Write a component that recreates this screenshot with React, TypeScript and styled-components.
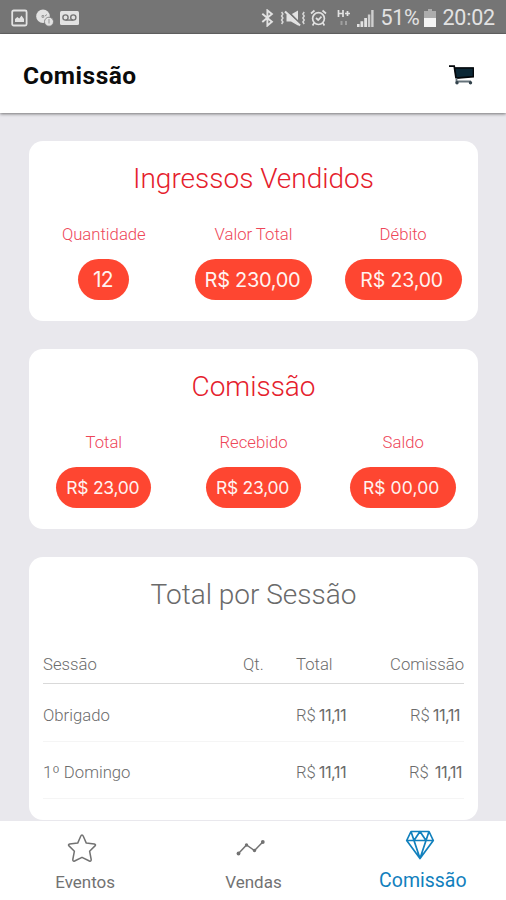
import React from "react";
import styled, { createGlobalStyle } from "styled-components";

const GlobalStyle = createGlobalStyle`
  * { box-sizing: border-box; }
  body { margin: 0; font-family: Roboto, "Liberation Sans", sans-serif; background: #e9e8ed; }
`;

const Screen = styled.div`
  width: 506px;
  height: 900px;
  display: flex;
  flex-direction: column;
  overflow: hidden;
  background: #e9e8ed;
`;

const StatusBar = styled.div`
  height: 34px;
  flex: none;
  display: flex;
  align-items: center;
  justify-content: space-between;
  padding: 3px 11px 0 11px;
  background: #757575;
  border-bottom: 1px solid #676767;
  color: #e2e2e2;
`;

const StatusGroup = styled.div`
  display: flex;
  align-items: center;
  svg { display: block; flex: none; }
`;

const StatusText = styled.span<{ $track: number }>`
  font-size: 21.5px;
  line-height: 30px;
  white-space: nowrap;
  letter-spacing: ${(p) => p.$track}px;
`;

const Gap = styled.span<{ $w: number }>`
  width: ${(p) => p.$w}px;
  flex: none;
`;

const Header = styled.header`
  height: 79px;
  flex: none;
  display: flex;
  align-items: center;
  justify-content: space-between;
  padding: 3px 32px 0 23px;
  background: #fff;
  box-shadow: 0 1px 3px rgba(0, 0, 0, 0.5);
  z-index: 1;
`;

const PageTitle = styled.h1`
  margin: 0;
  padding-top: 1px;
  font-size: 24.5px;
  line-height: 30px;
  font-weight: 700;
  letter-spacing: 0.5px;
  color: #0b0b0b;
`;

const Content = styled.main`
  flex: 1;
  min-height: 0;
  display: flex;
  flex-direction: column;
  gap: 28px;
  padding: 28px 28px 1px 29px;
`;

const Card = styled.section<{ $height: number }>`
  height: ${(p) => p.$height}px;
  flex: none;
  border-radius: 14px;
  background: #fff;
`;

const CardTitle = styled.h2<{ $muted?: boolean }>`
  margin: 0;
  padding-top: 20px;
  text-align: center;
  font-size: 28px;
  line-height: 36px;
  font-weight: 300;
  color: ${(p) => (p.$muted ? "#6a6a6a" : "#e5202c")};
`;

const Stats = styled.div`
  display: grid;
  grid-template-columns: repeat(3, 1fr);
  padding-top: 27px;
`;

const Stat = styled.div`
  display: flex;
  flex-direction: column;
  align-items: center;
  gap: 14px;
`;

const StatLabel = styled.div`
  font-size: 16.7px;
  line-height: 21px;
  font-weight: 300;
  color: #ee4658;
`;

const Pill = styled.div<{ $w: number; $size: number; $track: number; $shift: number }>`
  width: ${(p) => p.$w}px;
  height: 41px;
  padding-right: ${(p) => p.$shift}px;
  display: flex;
  align-items: center;
  justify-content: center;
  border-radius: 21px;
  background: #fe4631;
  color: #fff3f0;
  font-family: Inter, "Open Sans", sans-serif;
  font-size: ${(p) => p.$size}px;
  letter-spacing: ${(p) => p.$track}px;
  white-space: nowrap;
`;

const Table = styled.div`
  margin: 0 14px;
  padding-top: 38px;
`;

const Row = styled.div<{ $head?: boolean }>`
  display: grid;
  grid-template-columns: 200px 53px 1fr auto;
  align-items: center;
  height: ${(p) => (p.$head ? 33 : 57.5)}px;
  padding-top: ${(p) => (p.$head ? 0 : 6)}px;
  padding-bottom: ${(p) => (p.$head ? 5 : 0)}px;
  border-bottom: 1px solid ${(p) => (p.$head ? "#d9d9d9" : "#f5f5f5")};
  font-size: 16.7px;
  line-height: 21px;
  font-weight: 300;
  color: #6c6c6c;
  white-space: nowrap;
`;

const Money = styled.span<{ $gap?: number; $right?: number }>`
  display: flex;
  gap: ${(p) => p.$gap ?? 3}px;
  margin-right: ${(p) => p.$right ?? 0}px;
`;

const Amount = styled.span`
  font-family: Inter, sans-serif;
  font-size: 16.5px;
  font-weight: 400;
  letter-spacing: -0.6px;
`;

const TabBar = styled.nav`
  height: 79px;
  flex: none;
  display: grid;
  grid-template-columns: repeat(3, 1fr);
  padding-left: 1px;
  background: #fff;
`;

const Tab = styled.a<{ $active?: boolean }>`
  display: flex;
  flex-direction: column;
  align-items: center;
  padding-top: ${(p) => (p.$active ? 8 : 12)}px;
  padding-left: ${(p) => (p.$active ? 2 : 0)}px;
  color: ${(p) => (p.$active ? "#1180bd" : "#727272")};
  svg { display: block; }
`;

const TabLabel = styled.span<{ $active?: boolean }>`
  margin-top: ${(p) => (p.$active ? 7 : 6)}px;
  font-size: ${(p) => (p.$active ? 19.5 : 17)}px;
  line-height: 26px;
`;

const IconShift = styled.span<{ $right: number }>`
  margin-right: ${(p) => p.$right}px;
`;

const PictureIcon = () => (
  <svg width="17" height="18" viewBox="0 0 17 18" fill="none" stroke="#e2e2e2">
    <rect x="1.2" y="1.5" width="14.4" height="15" rx="1.5" strokeWidth="1.8" />
    <path d="M4 13V10l2.3-2 2 1.6 2.2-3L13 10v3z" fill="#e2e2e2" stroke="none" />
  </svg>
);

const DiscIcon = () => (
  <svg width="18" height="18" viewBox="0 0 18 18">
    <circle cx="7" cy="7.2" r="6.8" fill="#e2e2e2" />
    <circle cx="13" cy="12.7" r="4.5" fill="#e2e2e2" stroke="#757575" strokeWidth="0.8" />
    <path d="M6 6.5h1.8v1.8H6zM9 7l2-1.500M13 10v4.5" stroke="#969696" fill="none" />
  </svg>
);

const VoicemailIcon = () => (
  <svg width="19" height="14" viewBox="0 0 19 14">
    <rect width="19" height="14" rx="1.5" fill="#e2e2e2" />
    <g fill="none" stroke="#757575" strokeWidth="1.4">
      <circle cx="5.5" cy="6.5" r="2.6" />
      <circle cx="13.3" cy="6.5" r="2.6" />
      <path d="M5.5 9.1h7.8" />
    </g>
  </svg>
);

const BluetoothIcon = () => (
  <svg width="13" height="18" viewBox="0 0 13 18" fill="none" stroke="#e2e2e2" strokeWidth="1.9">
    <path d="M1.3 4.8l9.6 8-4.5 3.8V1.4L10.9 5l-9.6 8" />
  </svg>
);

const MuteIcon = () => (
  <svg width="26" height="18" viewBox="0 0 26 18">
    <path d="M6.5 5.5H11l7-4v15L11 12.5H6.5z" fill="#e2e2e2" />
    <path d="M7.5 2l13 13" stroke="#757575" strokeWidth="1.8" />
    <path d="M5 2.5l15 14" stroke="#e2e2e2" strokeWidth="2.2" />
    <path
      d="M1.6 3l1.3 2-1.3 2 1.3 2-1.3 2 1.3 2-1.3 2M24.2 3l-1.3 2 1.3 2-1.3 2 1.3 2-1.3 2 1.3 2"
      fill="none" stroke="#d8d8d8" strokeWidth="1.5"
    />
  </svg>
);

const AlarmIcon = () => (
  <svg width="17" height="18" viewBox="0 0 17 18" fill="none" stroke="#e2e2e2" strokeWidth="1.7">
    <circle cx="8.5" cy="9.6" r="5.9" />
    <path d="M1 4.5l3.5-3M16 4.5l-3.5-3M4.2 13.8L2.6 16.5M12.8 13.8l1.6 2.7M6 9l2.2 2 3.3-3.4" />
  </svg>
);

const DataIcon = () => (
  <svg width="13" height="18" viewBox="0 0 13 18" fill="none">
    <path d="M1.5 1v7M6 1v7M1.5 4.5H6M8 4.5h5M10.5 2v5" stroke="#e2e2e2" strokeWidth="1.7" />
    <path d="M4.5 12v4M9 12v4" stroke="#a0a0a0" strokeWidth="2" />
  </svg>
);

const SignalIcon = () => (
  <svg width="18" height="19" viewBox="0 0 18 19">
    <path d="M1 15h2.6v3H1zM4.5 12.2h2.7V18H4.5zM8.2 9H11v9H8.2z" fill="#e2e2e2" />
    <path d="M11.9 5.5h2.4V18h-2.4zM15.2 1h2.4v17h-2.4z" fill="#cfcfcf" />
  </svg>
);

const BatteryIcon = () => (
  <svg width="12" height="18" viewBox="0 0 12 18">
    <path d="M4 0h4v2h4v16H0V2h4z" fill="#adadad" />
    <path d="M0 9h12v9H0z" fill="#f4f4f4" />
  </svg>
);

const CartIcon = () => (
  <svg width="25" height="20" viewBox="0 0 25 20">
    <path d="M5 2.5h19.5v9.2L7 13.5z" fill="#0c2836" />
    <path d="M0 1.2h5.2L7 13M5.5 3h19v8.7L7 13.2" fill="none" stroke="#05080b" strokeWidth="1.7" />
    <path d="M7.5 13v3.5H22" fill="none" stroke="#65727a" strokeWidth="1.8" />
    <circle cx="8" cy="17.8" r="1.7" fill="#33434c" />
    <circle cx="21.5" cy="17.8" r="1.7" fill="#33434c" />
  </svg>
);

const StarIcon = () => (
  <svg width="30" height="30" viewBox="0 0 30 30" fill="none" stroke="currentColor" strokeWidth="1.5" strokeLinejoin="round">
    <path d="M15 2Q15.8 2 16.3 3.2L19.3 10.1L27.3 11Q29.3 11.5 28 12.9L22.6 18.2L24.2 26.5Q24.2 28.7 22.4 28L15 24.3L7.6 28Q5.8 28.7 5.8 26.5L7.4 18.2L2 12.9Q.7 11.5 2.7 11L10.7 10.1L13.7 3.2Q14.2 2 15 2Z" />
  </svg>
);

const TrendIcon = () => (
  <svg width="30" height="30" viewBox="0 0 30 30" fill="currentColor">
    <path d="M2.5 20.5L10.5 12L18.5 17.5L26.8 9" fill="none" stroke="currentColor" strokeWidth="1.5" />
    <circle cx="2.5" cy="20.5" r="1.9" />
    <circle cx="10.5" cy="12" r="1.7" />
    <circle cx="18.5" cy="17.5" r="1.7" />
    <circle cx="26.8" cy="9" r="1.9" />
  </svg>
);

const DiamondIcon = () => (
  <svg width="30" height="32" viewBox="0 0 30 32" fill="none" stroke="currentColor" strokeWidth="1.7" strokeLinejoin="round">
    <path d="M6 2.5H24L28.3 11.5L15 29.5L1.7 11.5ZM1.7 11.5H28.3M6 2.5L9 11.5L15 2.5L21 11.5L24 2.5M9 11.5L15 29.5L21 11.5" />
  </svg>
);

type StatItem = { label: string; value: string; w: number; size: number; track: number; shift: number };

const sold: StatItem[] = [
  { label: "Quantidade", value: "12", w: 51, size: 21, track: -0.8, shift: 2 },
  { label: "Valor Total", value: "R$ 230,00", w: 117, size: 20, track: -0.3, shift: 2 },
  { label: "Débito", value: "R$ 23,00", w: 117, size: 19.5, track: -0.15, shift: 3 },
];

const commission: StatItem[] = [
  { label: "Total", value: "R$ 23,00", w: 95, size: 17.5, track: -0.25, shift: 2 },
  { label: "Recebido", value: "R$ 23,00", w: 95, size: 17.5, track: -0.25, shift: 2 },
  { label: "Saldo", value: "R$ 00,00", w: 106, size: 17.5, track: 0.1, shift: 4 },
];

const StatRow = ({ items }: { items: StatItem[] }) => (
  <Stats>
    {items.map((s) => (
      <Stat key={s.label}>
        <StatLabel>{s.label}</StatLabel>
        <Pill $w={s.w} $size={s.size} $track={s.track} $shift={s.shift}>{s.value}</Pill>
      </Stat>
    ))}
  </Stats>
);

const sessions = [
  { name: "Obrigado", gap: 3, right: 4 },
  { name: "1º Domingo", gap: 6, right: 2 },
];

export default function App() {
  return (
    <>
      <GlobalStyle />
      <Screen>
        <StatusBar>
          <StatusGroup>
            <PictureIcon /><Gap $w={8} /><DiscIcon /><Gap $w={6} /><VoicemailIcon />
          </StatusGroup>
          <StatusGroup>
            <BluetoothIcon /><Gap $w={6} /><MuteIcon /><Gap $w={4} /><AlarmIcon /><Gap $w={10} />
            <DataIcon /><Gap $w={6} /><SignalIcon /><Gap $w={6} />
            <StatusText $track={-0.3}>51%</StatusText><Gap $w={5} /><BatteryIcon /><Gap $w={6} />
            <StatusText $track={-0.2}>20:02</StatusText>
          </StatusGroup>
        </StatusBar>
        <Header>
          <PageTitle>Comissão</PageTitle>
          <CartIcon />
        </Header>
        <Content>
          <Card $height={180}>
            <CardTitle>Ingressos Vendidos</CardTitle>
            <StatRow items={sold} />
          </Card>
          <Card $height={180}>
            <CardTitle>Comissão</CardTitle>
            <StatRow items={commission} />
          </Card>
          <Card $height={263}>
            <CardTitle $muted>Total por Sessão</CardTitle>
            <Table>
              <Row $head><span>Sessão</span><span>Qt.</span><span>Total</span><span>Comissão</span></Row>
              {sessions.map((s) => (
                <Row key={s.name}>
                  <span>{s.name}</span>
                  <span />
                  <Money><span>R$</span><Amount>11,11</Amount></Money>
                  <Money $gap={s.gap} $right={s.right}><span>R$</span><Amount>11,11</Amount></Money>
                </Row>
              ))}
            </Table>
          </Card>
        </Content>
        <TabBar>
          <Tab><IconShift $right={6}><StarIcon /></IconShift><TabLabel>Eventos</TabLabel></Tab>
          <Tab><IconShift $right={5}><TrendIcon /></IconShift><TabLabel>Vendas</TabLabel></Tab>
          <Tab $active><IconShift $right={6}><DiamondIcon /></IconShift><TabLabel $active>Comissão</TabLabel></Tab>
        </TabBar>
      </Screen>
    </>
  );
}
